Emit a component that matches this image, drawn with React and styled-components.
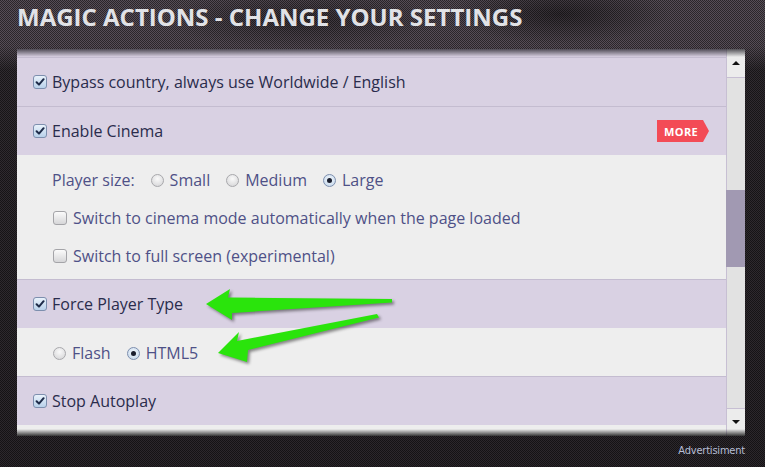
import React from "react";
import styled, { createGlobalStyle } from "styled-components";

const Global = createGlobalStyle`
  html, body { margin: 0; padding: 0; }
  body {
    width: 765px; height: 467px; overflow: hidden;
    font-family: "Open Sans", "Noto Sans", sans-serif;
    background:
      radial-gradient(ellipse 140px 28px at 300px 20px, rgba(0,0,0,0.35), rgba(0,0,0,0) 100%),
      radial-gradient(ellipse 110px 30px at 560px 14px, rgba(0,0,0,0.45), rgba(0,0,0,0) 100%),
      linear-gradient(to bottom, rgba(0,0,0,0) 0, rgba(0,0,0,0) 46px, rgba(0,0,0,0.45) 70px, rgba(0,0,0,0.5) 100%),
      repeating-conic-gradient(#574d57 0 25%, #2a262a 0 50%) 0 0 / 2px 2px;
  }
`;

const Page = styled.div`
  position: relative;
  width: 765px;
  height: 467px;
  display: flex;
  flex-direction: column;
`;

const Header = styled.header`
  height: 49px;
  padding-left: 17px;
  box-sizing: border-box;
`;

const Title = styled.h1`
  margin: 0;
  font-size: 24px;
  line-height: 33px;
  font-weight: 700;
  color: #e1e2e6;
`;

const Panel = styled.div`
  position: relative;
  margin-left: 17px;
  width: 728px;
  height: 387px;
  display: flex;
  overflow: hidden;
  &::before {
    content: "";
    position: absolute;
    left: 0; right: 0; top: 0;
    height: 8px;
    background: linear-gradient(to bottom, rgba(30,28,35,0.75), rgba(60,55,70,0));
    pointer-events: none;
  }
  &::after {
    content: "";
    position: absolute;
    left: 0; right: 0; bottom: 0;
    height: 7px;
    background: linear-gradient(to bottom, rgba(20,20,20,0), rgba(20,20,20,0.85));
    pointer-events: none;
  }
`;

const Content = styled.div`
  flex: 1;
  border-right: 1px solid #c7bfd3;
  background: #eeeeee;
`;

const TopSliver = styled.div`
  height: 8px;
  background: #d9d1e3;
`;

const Section = styled.section`
  border-top: 1px solid #c4bcd0;
`;

const Head = styled.div`
  height: 48px;
  background: #d9d1e3;
  display: flex;
  align-items: center;
  gap: 5px;
  padding: 0 17px 0 16px;
  color: #2a2c4c;
  font-size: 16px;
`;

const HeadLabel = styled.span`
  flex: 1;
`;

const Sub = styled.div`
  background: #eeeeee;
  padding: 6px 0 4px 35px;
`;

const SubItem = styled.div`
  height: 38px;
  display: flex;
  align-items: center;
  color: #4e5187;
  font-size: 16px;
`;

const Option = styled.label`
  display: inline-flex;
  align-items: center;
  gap: 6px;
  margin-left: ${(p) => (p.$first ? "1px" : "16px")};
`;

const Box = styled.span`
  flex: none;
  width: 14px;
  height: 14px;
  box-sizing: border-box;
  border-radius: 3px;
  border: 1px solid ${(p) => (p.$checked ? "#7d8fae" : "#a4a4a8")};
  background: ${(p) =>
    p.$checked
      ? "linear-gradient(#e9f2fb, #b9d1ea)"
      : "linear-gradient(#fbfbfb, #d6d6d8)"};
  display: inline-flex;
  align-items: center;
  justify-content: center;
`;

const Round = styled.span`
  flex: none;
  width: 13px;
  height: 13px;
  box-sizing: border-box;
  border-radius: 50%;
  border: 1px solid ${(p) => (p.$checked ? "#7d8fae" : "#a8a8ac")};
  background: ${(p) =>
    p.$checked
      ? "radial-gradient(circle at 50% 40%, #f3f8fd, #bfd3e8)"
      : "radial-gradient(circle at 50% 35%, #fafafa, #d2d2d4)"};
  display: inline-flex;
  align-items: center;
  justify-content: center;
  &::after {
    content: "";
    width: 5px;
    height: 5px;
    border-radius: 50%;
    background: #1b1f2e;
    display: ${(p) => (p.$checked ? "block" : "none")};
  }
`;

const More = styled.span`
  flex: none;
  height: 22px;
  width: 52px;
  box-sizing: border-box;
  padding-left: 7px;
  display: inline-flex;
  align-items: center;
  background: #f34b56;
  color: #ffffff;
  font-weight: 700;
  font-size: 11px;
  letter-spacing: 0.4px;
  clip-path: polygon(0 0, 46px 0, 52px 50%, 46px 100%, 0 100%);
`;

const Scrollbar = styled.div`
  width: 18px;
  flex: none;
  display: flex;
  flex-direction: column;
  background: #e2e2e2;
`;

const ScrollBtn = styled.div`
  height: ${(p) => p.$h}px;
  flex: none;
  background: #ececec;
  display: flex;
  align-items: center;
  justify-content: center;
  border-${(p) => (p.$up ? "bottom" : "top")}: 1px solid #c7bfd3;
  &::after {
    content: "";
    width: 0; height: 0;
    border-left: 4px solid transparent;
    border-right: 4px solid transparent;
    ${(p) => (p.$up ? "border-bottom: 4px solid #111;" : "border-top: 4px solid #111;")}
    margin-top: ${(p) => (p.$up ? "0" : "-2px")};
  }
`;

const Track = styled.div`
  flex: 1;
  display: flex;
  flex-direction: column;
`;

const Thumb = styled.div`
  margin-top: 112px;
  height: 77px;
  margin-left: -1px;
  background: #a199b2;
`;

const Footer = styled.footer`
  flex: 1;
  display: flex;
  justify-content: flex-end;
  padding: 8px 20px 0 0;
`;

const Ad = styled.span`
  font-family: "DejaVu Sans Condensed", "DejaVu Sans", sans-serif;
  font-stretch: condensed;
  font-size: 11px;
  line-height: 14px;
  color: #b7bfd6;
  letter-spacing: -0.2px;
`;

const Arrows = styled.svg`
  position: absolute;
  left: 0;
  top: 0;
  pointer-events: none;
  filter: drop-shadow(2px 2px 1.5px rgba(0, 0, 0, 0.45));
`;

const Tick = () => (
  <svg width="10" height="10" viewBox="0 0 10 10">
    <path d="M1.6 5.2 L4 7.6 L8.6 2.2" fill="none" stroke="#1d2a48" strokeWidth="2" strokeLinecap="round" strokeLinejoin="round" />
  </svg>
);

const Checkbox = ({ checked }) => <Box $checked={checked}>{checked && <Tick />}</Box>;

export default function App() {
  return (
    <Page>
      <Global />
      <Header>
        <Title>MAGIC ACTIONS - CHANGE YOUR SETTINGS</Title>
      </Header>
      <Panel>
        <Content>
          <TopSliver />
          <Section>
            <Head>
              <Checkbox checked />
              <HeadLabel>Bypass country, always use Worldwide / English</HeadLabel>
            </Head>
          </Section>
          <Section>
            <Head>
              <Checkbox checked />
              <HeadLabel>Enable Cinema</HeadLabel>
              <More>MORE</More>
            </Head>
            <Sub>
              <SubItem>
                <span>Player size:</span>
                <Option><Round /> Small</Option>
                <Option><Round /> Medium</Option>
                <Option><Round $checked /> Large</Option>
              </SubItem>
              <SubItem>
                <Option $first><Checkbox /> Switch to cinema mode automatically when the page loaded</Option>
              </SubItem>
              <SubItem>
                <Option $first><Checkbox /> Switch to full screen (experimental)</Option>
              </SubItem>
            </Sub>
          </Section>
          <Section>
            <Head>
              <Checkbox checked />
              <HeadLabel>Force Player Type</HeadLabel>
            </Head>
            <Sub>
              <SubItem>
                <Option $first><Round /> Flash</Option>
                <Option><Round $checked /> HTML5</Option>
              </SubItem>
            </Sub>
          </Section>
          <Section>
            <Head>
              <Checkbox checked />
              <HeadLabel>Stop Autoplay</HeadLabel>
            </Head>
            <Sub />
          </Section>
        </Content>
        <Scrollbar>
          <ScrollBtn $up $h={28} />
          <Track>
            <Thumb />
          </Track>
          <ScrollBtn $h={27} />
        </Scrollbar>
      </Panel>
      <Footer>
        <Ad>Advertisiment</Ad>
      </Footer>
      <Arrows width="765" height="467" viewBox="0 0 765 467">
        <polygon
          points="206,304 230,289 228,297.5 392,299 392,302.5 232,313 232,320"
          fill="#2ae40c"
        />
        <polygon
          points="218,353 239,332 237,341 377,314 379,317.5 248,350 247,362"
          fill="#2ae40c"
        />
      </Arrows>
    </Page>
  );
}
